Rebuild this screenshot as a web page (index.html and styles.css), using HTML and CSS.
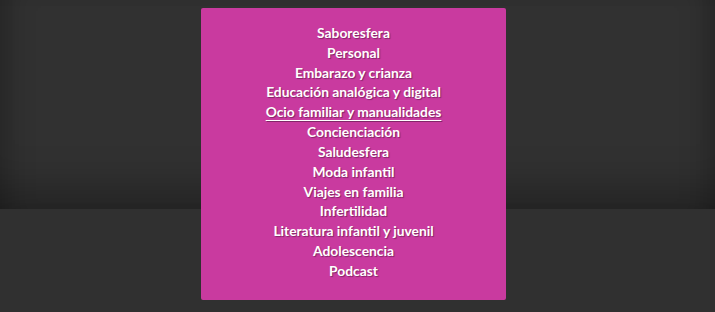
FILE: index.html
```html
<!DOCTYPE html>
<html lang="es">
<head>
<meta charset="utf-8">
<title>Menú</title>
<link rel="stylesheet" href="styles.css">
</head>
<body>
<div class="hero"></div>
<div class="band"></div>
<nav class="menu">
  <ul class="menu-list">
    <li><a href="#">Saboresfera</a></li>
    <li><a href="#">Personal</a></li>
    <li><a href="#">Embarazo y crianza</a></li>
    <li><a href="#">Educación analógica y digital</a></li>
    <li><a href="#" class="active">Ocio familiar y manualidades</a></li>
    <li><a href="#">Concienciación</a></li>
    <li><a href="#">Saludesfera</a></li>
    <li><a href="#">Moda infantil</a></li>
    <li><a href="#">Viajes en familia</a></li>
    <li><a href="#">Infertilidad</a></li>
    <li><a href="#">Literatura infantil y juvenil</a></li>
    <li><a href="#">Adolescencia</a></li>
    <li><a href="#">Podcast</a></li>
  </ul>
</nav>
</body>
</html>
```
FILE: styles.css
```css
html, body {
  margin: 0;
  padding: 0;
  background: #303030;
  height: 100%;
  overflow: hidden;
}
body {
  position: relative;
  font-family: Lato, "Open Sans", sans-serif;
}
.hero {
  height: 209px;
  background: #313131;
  box-shadow:
    inset 0 -50px 40px -30px rgba(0,0,0,0.28),
    inset 30px 0 30px -25px rgba(0,0,0,0.25),
    inset -30px 0 30px -25px rgba(0,0,0,0.25);
}
.band {
  height: 103px;
  background: #303030;
}
.menu {
  position: absolute;
  top: 8px;
  left: 201px;
  width: 305px;
  height: 292px;
  box-sizing: border-box;
  background: #c93a9f;
  border-radius: 2px;
  padding-top: 14px;
}
.menu-list {
  list-style: none;
  margin: 0;
  padding: 0;
  text-align: center;
}
.menu-list li {
  line-height: 19.83px;
  height: 19.83px;
}
.menu-list a {
  color: #fff;
  text-decoration: none;
  font-weight: 700;
  font-size: 13.8px;
  text-shadow: 1px 1px 1px rgba(0,0,0,0.35);
}
.menu-list a.active {
  text-decoration: underline;
  text-underline-offset: 3px;
  text-decoration-thickness: 1px;
}
```
